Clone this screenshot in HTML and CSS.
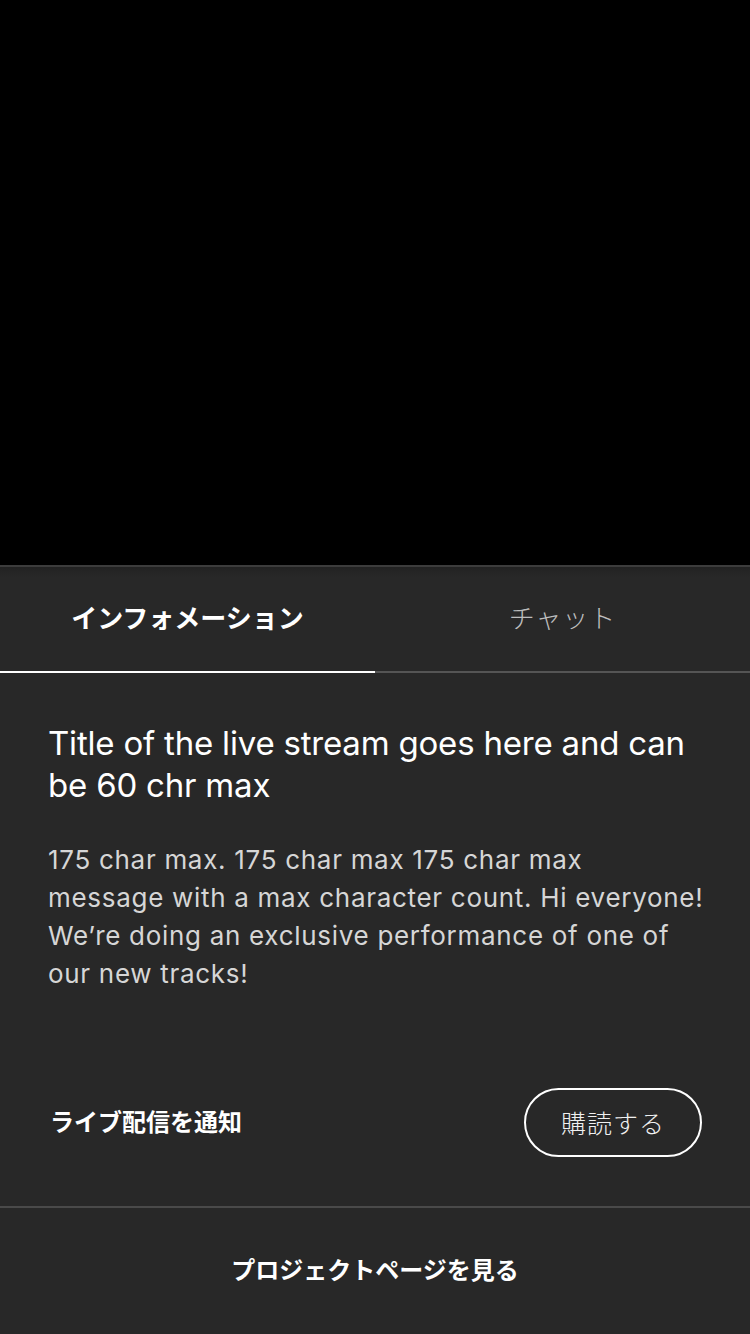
FILE: index.html
```html
<!DOCTYPE html>
<html lang="ja">
<head>
<meta charset="utf-8">
<title>Live</title>
<link rel="stylesheet" href="styles.css">
</head>
<body>
<div class="screen">
  <div class="video"></div>
  <div class="panel">
    <div class="tabs">
      <div class="tab active">インフォメーション</div>
      <div class="tab">チャット</div>
    </div>
    <div class="info">
      <h1 class="title">Title of the live stream goes here and can be 60 chr max</h1>
      <p class="desc">175 char max. 175 char max 175 char max<br>message with a max character count. Hi everyone!<br>We’re doing an exclusive performance of one of<br>our new tracks!</p>
    </div>
    <div class="notify">
      <span class="notify-label">ライブ配信を通知</span>
      <button class="subscribe">購読する</button>
    </div>
    <div class="project">プロジェクトページを見る</div>
  </div>
</div>
</body>
</html>
```

FILE: styles.css
```css
html, body {
  margin: 0;
  padding: 0;
  background: #282828;
}
body {
  font-family: Roboto, "Noto Sans CJK JP", sans-serif;
  color: #fff;
}
.screen {
  width: 750px;
  height: 1334px;
  display: flex;
  flex-direction: column;
  overflow: hidden;
}
.video {
  height: 565px;
  background: #000;
  flex: none;
}
.panel {
  flex: 1;
  display: flex;
  flex-direction: column;
  background: #282828;
  border-top: 2px solid #3c3c3c;
  background-image: linear-gradient(#222 0, #282828 10px);
}
.tabs {
  display: flex;
  height: 106px;
  flex: none;
  box-sizing: border-box;
}
.tab {
  flex: 1;
  display: flex;
  align-items: center;
  justify-content: center;
  font-size: 26px;
  color: #bdbdbd;
  font-weight: 300;
  letter-spacing: 1px;
  border-bottom: 2px solid #555;
  padding-bottom: 6px;
}
.tab.active {
  color: #fff;
  font-weight: 700;
  border-bottom-color: #fff;
  letter-spacing: 0;
}
.info {
  box-sizing: border-box;
  padding: 49px 48px 0;
  height: 404px;
  flex: none;
  font-family: Inter, Roboto, sans-serif;
}
.title {
  margin: 0;
  font-size: 33px;
  font-weight: 400;
  line-height: 42px;
  color: #fff;
  letter-spacing: -0.2px;
}
.desc {
  margin: 35px -24px 0 0;
  font-size: 26px;
  line-height: 38px;
  color: #d6d6d6;
  font-weight: 400;
  letter-spacing: 0.7px;
}
.notify {
  display: flex;
  align-items: center;
  justify-content: space-between;
  padding: 0 48px;
  height: 90px;
  flex: none;
}
.notify-label {
  font-size: 24px;
  font-weight: 700;
  margin-left: 2px;
  padding-bottom: 3px;
}
.subscribe {
  width: 178px;
  height: 69px;
  border: 2px solid #fff;
  border-radius: 35px;
  background: transparent;
  color: #f0f0f0;
  font-family: "Noto Sans CJK JP", sans-serif;
  font-size: 25px;
  font-weight: 300;
  letter-spacing: 1px;
}
.project {
  border-top: 2px solid #4a4a4a;
  margin-top: 39px;
  flex: 1;
  display: flex;
  align-items: center;
  justify-content: center;
  font-size: 24px;
  font-weight: 700;
  padding-bottom: 6px;
}
```
